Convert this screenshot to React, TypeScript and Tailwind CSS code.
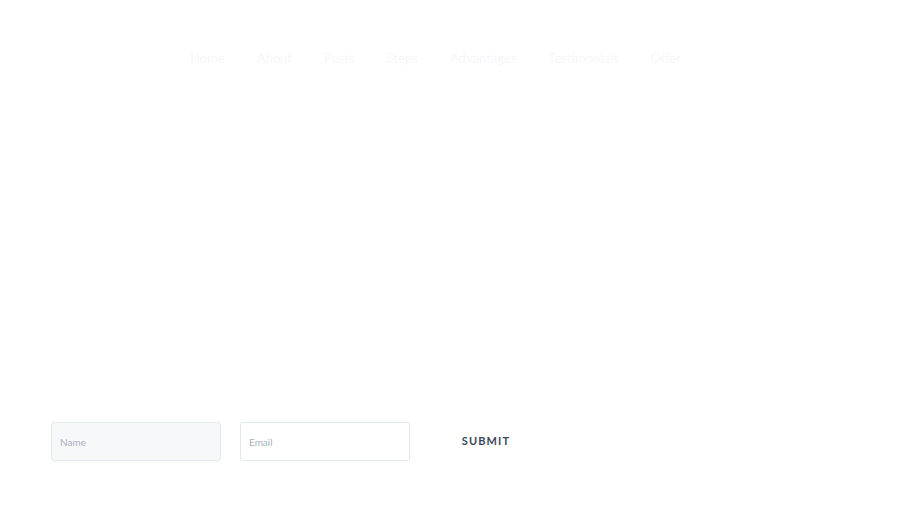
import { useState } from "react";

const links = ["Home", "About", "Posts", "Steps", "Advantages", "Testimonials", "Offer"];

export default function App() {
  const [name, setName] = useState("");
  const [email, setEmail] = useState("");

  return (
    <div className="min-h-[521px] bg-white font-['Lato','Noto_Sans',sans-serif] text-white">
      {/* Header */}
      <header className="pt-[50px] pl-[190px]">
        <nav className="flex items-center gap-[32px] text-[13px] leading-4 text-[#f6f7f9]">
          {links.map((l) => (
            <a key={l} href={`#${l.toLowerCase()}`} className="hover:text-white">
              {l}
            </a>
          ))}
        </nav>
      </header>

      {/* Hero */}
      <main className="mt-[80px] pl-[51px] pr-[50px]">
        <h1 className="max-w-[560px] text-[60px] leading-[75px] font-bold text-white">
          Your business growth and success
        </h1>
        <p className="mt-8 max-w-[480px] pl-[4px] text-[15px] leading-6 text-white">
          We help modern teams build better products with simple tools, clear
          processes and a community of people who care about your progress and
          your results every single day of the year, from start to finish.
        </p>

        <form
          className="mt-[22px] flex items-center"
          onSubmit={(e) => e.preventDefault()}
        >
          <input
            value={name}
            onChange={(e) => setName(e.target.value)}
            placeholder="Name"
            className="h-[39px] w-[170px] rounded-[3px] border border-[#e3e8ee] bg-[#f6f8fa] px-[8px] text-[10px] text-[#3d4a5c] placeholder:text-[#a7b1bd] outline-none"
          />
          <input
            value={email}
            onChange={(e) => setEmail(e.target.value)}
            placeholder="Email"
            className="ml-[19px] h-[39px] w-[170px] rounded-[3px] border border-[#e3e8ee] bg-white px-[8px] text-[10px] text-[#3d4a5c] placeholder:text-[#a7b1bd] outline-none"
          />
          <button
            type="submit"
            className="ml-[21px] h-[39px] w-[110px] text-[11px] font-bold tracking-[0.1em] text-[#3b475a]"
          >
            SUBMIT
          </button>
        </form>
      </main>
    </div>
  );
}
